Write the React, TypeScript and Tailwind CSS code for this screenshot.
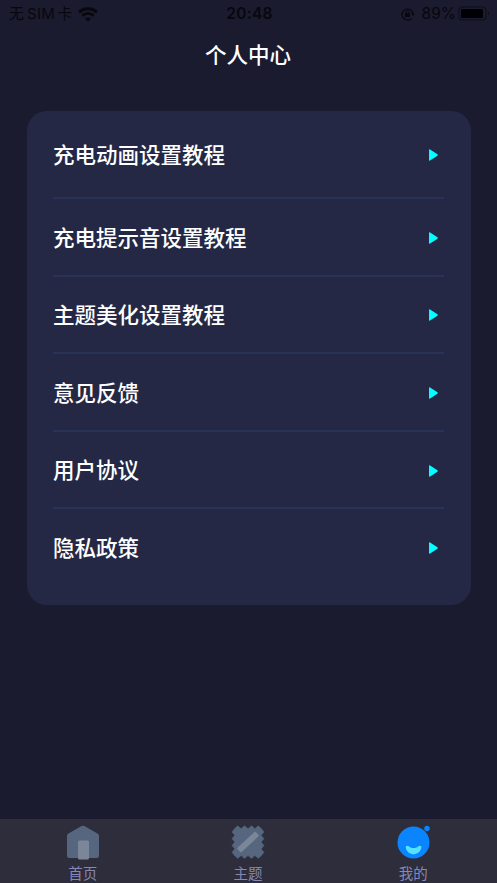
import type { ReactNode } from "react";

const menuItems = [
  "充电动画设置教程",
  "充电提示音设置教程",
  "主题美化设置教程",
  "意见反馈",
  "用户协议",
  "隐私政策",
];

function StatusBar() {
  return (
    <div className="grid h-[26px] grid-cols-3 items-center pl-[9px] pr-[7px] font-['Inter','Noto_Sans_CJK_SC',sans-serif] text-[16px] leading-[26px] text-[#07070d]">
      <div className="flex items-center pt-px">
        <span className="text-[15px] whitespace-nowrap">无</span>
        <span className="ml-[3px] text-[15px] tracking-[0.3px]">SIM</span>
        <span className="ml-[2px] text-[15px]">卡</span>
        <svg className="ml-[6px] h-[15px] w-[20px]" viewBox="0 0 20 15" fill="none" stroke="currentColor">
          <path d="M1 5.200C6 .6 14 .6 19 5.200" strokeWidth="3" />
          <path d="M4.200 8.600c3.400-3 8.200-3 11.600 0" strokeWidth="2.800" />
          <path d="M10 14.600 6.900 11.500c1.800-1.500 4.400-1.500 6.200 0z" fill="currentColor" stroke="none" />
        </svg>
      </div>
      <div className="text-center text-[15.500px] font-semibold tracking-[0.3px]">20:48</div>
      <div className="flex items-center justify-end">
        <svg className="h-[14px] w-[14px]" viewBox="0 0 14 14" fill="none" stroke="currentColor">
          <path d="M10.600 11.300A5.500 5.500 0 1 1 12 6.500" strokeWidth="1.200" />
          <path d="M10 6.400h3.900L12 9z" fill="currentColor" stroke="none" />
          <rect x="4" y="6.200" width="5" height="3.800" rx=".5" fill="currentColor" stroke="none" />
          <path d="M5.100 6.500V5.200a1.400 1.400 0 0 1 2.800 0v1.300" />
        </svg>
        <span className="ml-[7px] text-[15.500px]">89%</span>
        <svg className="ml-[2px] h-[15px] w-[32px]" viewBox="0 0 32 15">
          <rect x="1" y="1" width="27" height="13" rx="3.500" fill="none" stroke="#0f101b" strokeWidth="1.200" />
          <rect x="3" y="3" width="22" height="9" rx="1.500" fill="#000003" />
          <path d="M30 5.500c1.800.6 1.800 3.400 0 4z" fill="#0f101b" />
        </svg>
      </div>
    </div>
  );
}

function Arrow() {
  return (
    <svg className="mt-[2px] h-[12px] w-[10px]" viewBox="0 0 10 12" fill="#00ffff">
      <path d="M0 1C0 .300.500.1 1.100.500l7.300 4.800c.5.400.5 1 0 1.400l-7.300 4.800C.500 11.900 0 11.700 0 11z" />
    </svg>
  );
}

function HomeIcon() {
  return (
    <svg className="h-[36px] w-[34px]" viewBox="0 0 34 36">
      <path d="M15.600 2.100a3 3 0 0 1 2.800 0L31.500 9.400A3 3 0 0 1 33 12v19.500a2.500 2.500 0 0 1-2.500 2.500h-27A2.500 2.500 0 0 1 1 31.500V12a3 3 0 0 1 1.500-2.600z" fill="#56667f" />
      <rect x="12" y="16.500" width="11" height="19" rx="1.500" fill="#7b8799" />
    </svg>
  );
}

function ThemeIcon() {
  return (
    <svg className="h-[36px] w-[34px]" viewBox="0 0 34 36">
      <path
        d="M3.500 4.700 6.700 1.800 10.100 4.700 13.500 1.800 17 4.700 20.500 1.800 23.900 4.700 27.300 1.800 30.500 4.700 33 7.900 30.200 11.300 33 14.700 30.200 18.100 33 21.500 30.200 24.900 33 28.300 30.500 31.500 27.300 34.400 23.900 31.500 20.500 34.400 17 31.500 13.500 34.400 10.100 31.500 6.700 34.400 3.500 31.500 1 28.300 3.800 24.900 1 21.500 3.800 18.100 1 14.700 3.800 11.300 1 7.900z"
        fill="#56667f"
        stroke="#56667f"
        strokeWidth=".5"
        strokeLinejoin="round"
      />
      <rect x="4.500" y="15" width="25" height="6" rx="1" fill="#7b8799" transform="rotate(-43 17 18)" />
    </svg>
  );
}

function ProfileIcon() {
  return (
    <svg className="h-[36px] w-[34px]" viewBox="0 0 34 36">
      <circle cx="17.500" cy="18.500" r="16" fill="#0a84ff" />
      <circle cx="31" cy="4.500" r="2.700" fill="#0a84ff" />
      <path d="M9.800 24c-.6-2.200 1.800-3 3.300-1.600 2.300 2 6.600 2 8.900 0 1.500-1.400 3.900-.6 3.300 1.600-2.200 8.300-13.300 8.300-15.500 0z" fill="#55e0ff" />
    </svg>
  );
}

function Tab({ icon, label }: { icon: ReactNode; label: string }) {
  return (
    <button className="flex flex-1 flex-col items-center pt-[5px]">
      {icon}
      <span className="mt-[3px] text-[14.500px] leading-[20px] text-[#8587b8]">{label}</span>
    </button>
  );
}

export default function App() {
  return (
    <div className="flex h-[883px] w-[497px] flex-col overflow-hidden bg-[#1a1b2f] font-['Noto_Sans_CJK_SC',sans-serif]">
      <StatusBar />
      <h1 className="mt-[12px] pr-px text-center text-[21.500px] leading-[32px] font-medium text-white">个人中心</h1>

      <div className="mx-[26.500px] mt-[41px] h-[494px] rounded-[20px] bg-[#242845] px-[26.500px]">
        {menuItems.map((item) => (
          <button
            key={item}
            className="flex h-[77.600px] w-full items-center justify-between border-b-2 border-[#293357] pr-[5px] text-[21.500px] font-medium text-white first:h-[88px] last:h-[76px] last:border-b-0"
          >
            <span>{item}</span>
            <Arrow />
          </button>
        ))}
      </div>

      <nav className="mt-auto flex h-[64px] bg-[#2d2d3b] pr-px">
        <Tab icon={<HomeIcon />} label="首页" />
        <Tab icon={<ThemeIcon />} label="主题" />
        <Tab icon={<ProfileIcon />} label="我的" />
      </nav>
    </div>
  );
}
